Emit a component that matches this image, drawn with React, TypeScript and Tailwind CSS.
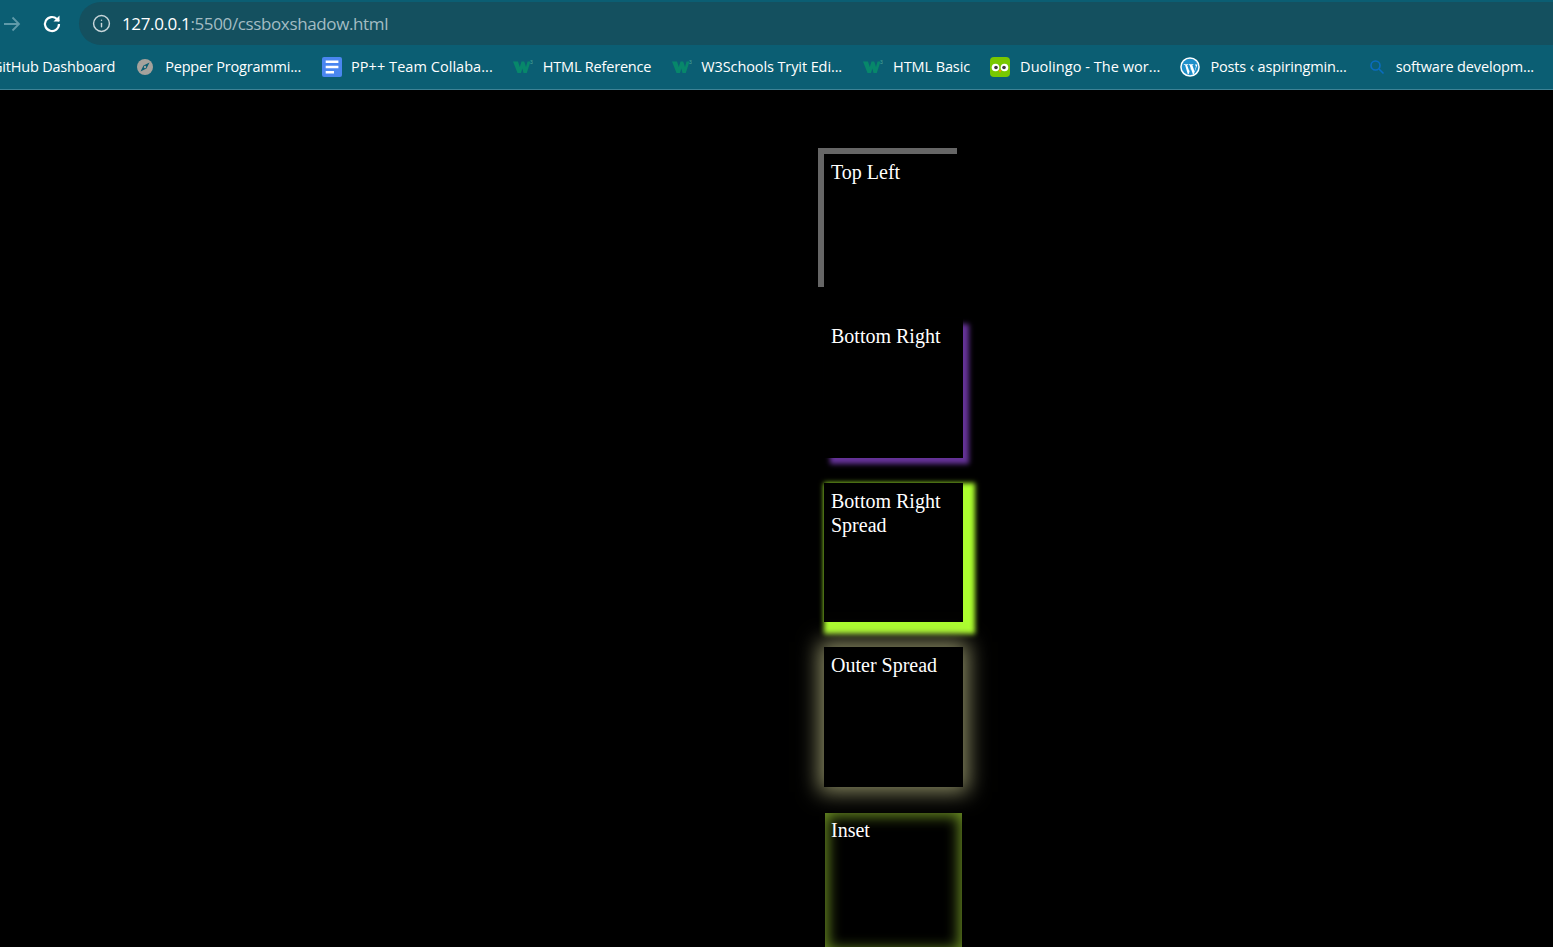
import { Info } from "lucide-react";

function W3Icon() {
  return (
    <svg width="20" height="16" viewBox="0 0 20 16" className="shrink-0">
      <path d="M0 2.500h5l1.800 5.500L8.500 2.500h2.700l1.800 5.500 1.500-5.500H17.500L13.800 14h-3.300L9.400 9.500 8 14H4.500z" fill="#07876a" />
      <text x="17" y="4.500" fontSize="5" fill="#4fa896" fontFamily="Liberation Sans, sans-serif">3</text>
    </svg>
  );
}

function CompassIcon() {
  return (
    <svg width="16" height="16" viewBox="0 0 16 16" className="shrink-0">
      <circle cx="8" cy="8" r="8" fill="#a5a29c" />
      <path d="M12.500 3.500 9.500 9.500 3.500 12.500l3-6z" fill="#0b5e73" />
      <circle cx="8" cy="8" r="1.200" fill="#a5a29c" />
    </svg>
  );
}

function DocsIcon() {
  return (
    <svg width="20" height="20" viewBox="0 0 20 20" className="shrink-0">
      <rect width="20" height="20" rx="2" fill="#4a86f0" />
      <path d="M3.700 3.500h12.700V6H3.700zM3.700 8.800h12.700v2.500H3.700zM3.700 14H12v2.500H3.700z" fill="#fff" />
    </svg>
  );
}

function DuoIcon() {
  return (
    <svg width="20" height="20" viewBox="0 0 20 20" className="shrink-0">
      <rect width="20" height="20" rx="4" fill="#78c800" />
      <circle cx="5.500" cy="10.500" r="3.800" fill="#fff" />
      <circle cx="14.500" cy="10.500" r="3.800" fill="#fff" />
      <circle cx="6" cy="10.500" r="1.800" fill="#3c3c3c" />
      <circle cx="14" cy="10.500" r="1.800" fill="#3c3c3c" />
      <path d="M8.500 13h3L10 16z" fill="#f49000" />
    </svg>
  );
}

function WordpressIcon() {
  return (
    <svg width="20" height="20" viewBox="0 0 20 20" className="shrink-0">
      <circle cx="10" cy="10" r="9.800" fill="#fff" />
      <circle cx="10" cy="10" r="8.300" fill="#1f8fc9" />
      <path d="M3.800 7.200h4.300v.7l-1 .2 2.300 6.500 1.200-3.700-1-2.800-.8-.2v-.7h4.500v.7l-1 .2 2.200 6.400 1.300-4.400c.3-1 0-1.500-.8-2v-.7h2.500l-3.800 9.800h-.8l-2.200-6-2.100 6h-.8L5.100 8.100l-1.300-.2z" fill="#fff" />
    </svg>
  );
}

function SearchIcon() {
  return (
    <svg width="18" height="18" viewBox="0 0 18 18" fill="none" stroke="#0a6cc0" strokeWidth="1.600" className="shrink-0">
      <circle cx="7.500" cy="7.500" r="4.500" />
      <path d="m11 11 4.500 4.500" />
    </svg>
  );
}

function Bookmark({
  icon,
  label,
  iconBox,
  labelClass = "",
}: {
  icon: React.ReactNode;
  label: string;
  iconBox: string;
  labelClass?: string;
}) {
  return (
    <div className="flex items-center shrink-0">
      <span className={`flex items-center justify-center ${iconBox}`}>{icon}</span>
      <span className={`whitespace-nowrap ${labelClass}`}>{label}</span>
    </div>
  );
}

const box = "w-[139px] h-[139.400px] shrink-0 px-[7px] pt-[6px] bg-black font-['Liberation_Serif',serif] text-[20px] leading-[24px] text-white";

export default function App() {
  return (
    <div className="h-[947px] overflow-hidden bg-black">
      {/* Browser chrome */}
      <header className="h-[90px] bg-[#0b5e73] border-b border-[#3d8295] font-['Open_Sans',sans-serif]">
        <div className="flex items-center h-[45px] pt-[2px]">
          <svg width="22" height="22" viewBox="0 0 22 22" fill="none" stroke="#5f9aa9" strokeWidth="1.800" className="ml-[1px] shrink-0">
            <path d="M3 11h15M11.500 4.500 18 11l-6.500 6.500" />
          </svg>
          <svg width="22" height="22" viewBox="0 0 22 22" fill="none" stroke="#fff" strokeWidth="2.200" className="ml-[18px] shrink-0">
            <path d="M18 11a7 7 0 1 1-2.100-5L18 8" />
            <path d="M18.500 2.500V8.500H12.500" fill="#fff" stroke="none" />
          </svg>
          <div className="flex-1 flex items-center h-[43px] ml-[16px] pl-[13px] bg-[#14505f] rounded-l-[22px]">
            <Info size={19} strokeWidth={1.800} className="text-[#c9d6da] shrink-0" />
            <div className="ml-[11px] text-[17px] tracking-[-0.37px] whitespace-nowrap">
              <span className="text-white">127.0.0.1</span>
              <span className="text-[#a3bcc3]">:5500/cssboxshadow.html</span>
            </div>
          </div>
        </div>
        <div className="flex items-center h-[44px] -ml-[8px] text-[14.500px] tracking-[-0.2px] text-white pb-[1px]">
          <span className="whitespace-nowrap shrink-0">GitHub Dashboard</span>
          <Bookmark iconBox="w-[16px] ml-[22px] mr-[12px]" icon={<CompassIcon />} label="Pepper Programmi..." />
          <Bookmark iconBox="w-[20px] ml-[21px] mr-[9px]" labelClass="tracking-[0.05px]" icon={<DocsIcon />} label="PP++ Team Collaba..." />
          <Bookmark iconBox="w-[20px] ml-[20px] mr-[10px]" icon={<W3Icon />} label="HTML Reference" />
          <Bookmark iconBox="w-[20px] ml-[21px] mr-[9px]" labelClass="tracking-[-0.1px]" icon={<W3Icon />} label="W3Schools Tryit Edi..." />
          <Bookmark iconBox="w-[20px] ml-[21px] mr-[10px]" labelClass="tracking-[-0.1px]" icon={<W3Icon />} label="HTML Basic" />
          <Bookmark iconBox="w-[20px] ml-[20px] mr-[10px]" labelClass="tracking-[0.05px]" icon={<DuoIcon />} label="Duolingo - The wor..." />
          <Bookmark iconBox="w-[20px] ml-[20px] mr-[10px]" labelClass="tracking-[-0.15px]" icon={<WordpressIcon />} label="Posts ‹ aspiringmin..." />
          <Bookmark iconBox="w-[20px] ml-[20px] mr-[9px]" labelClass="tracking-[-0.15px]" icon={<SearchIcon />} label="software developm..." />
        </div>
      </header>

      {/* Page */}
      <main className="flex flex-col gap-[25.100px] pl-[824px] pt-[63.900px]">
        <div className={`${box} shadow-[-6px_-6px_0_0_#666666]`}>Top Left</div>
        <div className={`${box} shadow-[6px_6px_5px_0_#663399]`}>Bottom Right</div>
        <div className={`${box} shadow-[6px_6px_5px_6px_#adff2f]`}>Bottom Right Spread</div>
        <div className={`${box} shadow-[0_0_20px_5px_#8c8c64]`}>Outer Spread</div>
        <div className={`${box} ml-[1px] !w-[137px] !px-[6px] !pt-[5.500px] mt-[0.700px] shadow-[inset_0_0_14px_3px_#6b8e23]`}>Inset</div>
      </main>
    </div>
  );
}
